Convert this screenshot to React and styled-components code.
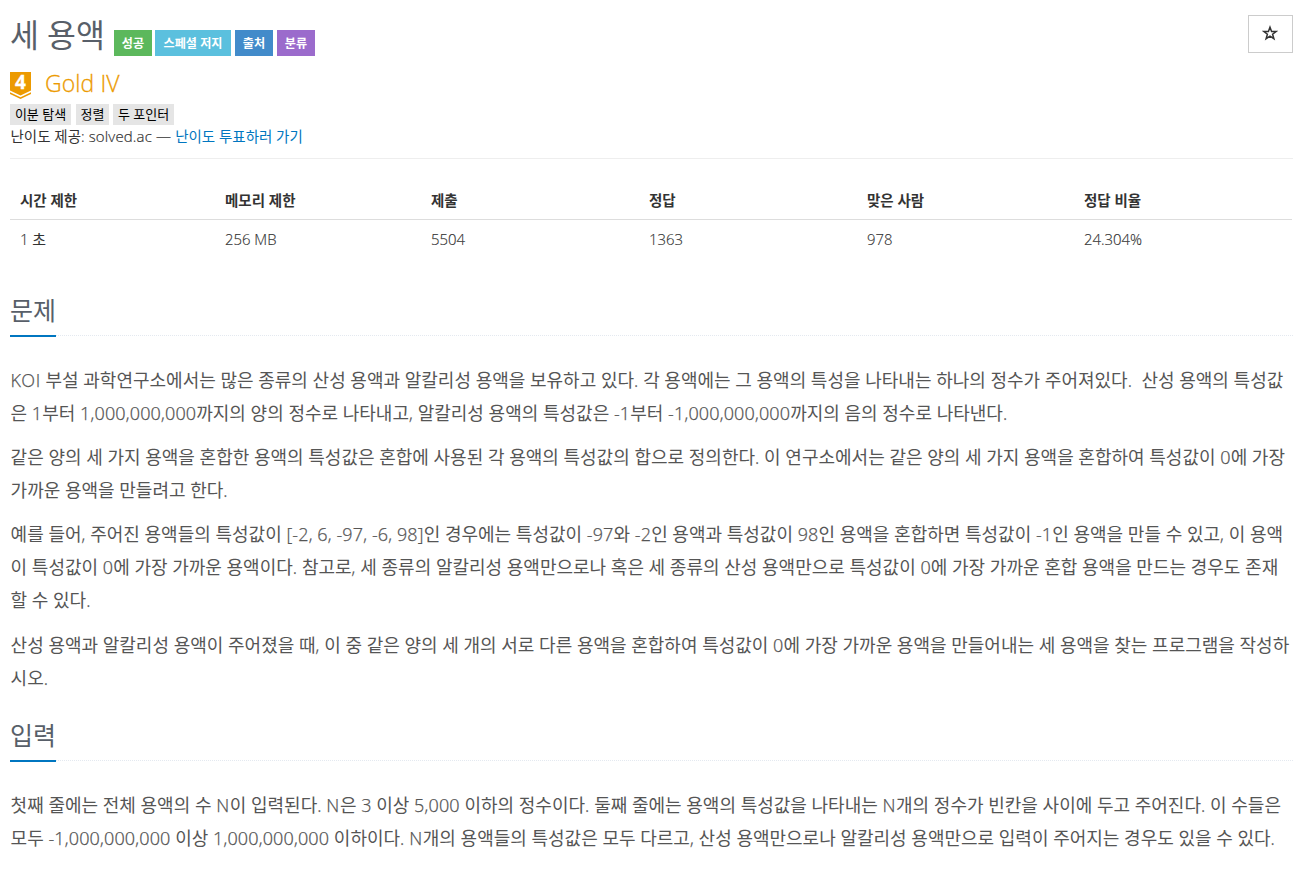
import styled, { createGlobalStyle } from 'styled-components'

const GlobalStyle = createGlobalStyle`
  * {
    box-sizing: border-box;
  }

  body {
    margin: 0;
    background-color: #fff;
    color: #333;
    font-family: 'Open Sans Light', 'Open Sans', 'Noto Sans CJK KR', sans-serif;
    font-size: 15px;
    font-weight: 400;
    line-height: 1.6;
  }
`

const Page = styled.main`
  width: 1303px;
  padding: 15px 10px 0;
`

const Header = styled.header`
  display: flex;
  flex-direction: column;
  height: 144px;
  border-bottom: 1px solid #eee;
`

const TitleRow = styled.div`
  display: flex;
  justify-content: space-between;
  height: 52px;
`

const TitleGroup = styled.div`
  display: flex;
  align-items: flex-start;
`

const Title = styled.h1`
  width: 104px;
  margin: 0;
  color: #585f69;
  font-size: 31.4px;
  font-weight: 400;
  line-height: 40px;
  white-space: nowrap;
`

const LabelGroup = styled.div`
  display: flex;
  gap: 4px;
  padding-top: 15px;
`

const Label = styled.span`
  width: ${({ $width }) => $width};
  height: 26px;
  background-color: ${({ $color }) => $color};
  color: #fff;
  font-size: 12.1px;
  font-weight: 700;
  line-height: 27px;
  text-align: center;
  white-space: nowrap;

  &:first-child {
    margin-right: -1px;
  }
`

const StarButton = styled.button`
  display: flex;
  align-items: center;
  justify-content: center;
  width: 45px;
  height: 38px;
  padding: 0 2px 2px 0;
  border: 1px solid #ccc;
  background-color: #fff;
  color: #333;
`

const Tier = styled.div`
  display: flex;
  align-items: center;
  gap: 14px;
  height: 36px;
  color: #ec9a00;
  font-size: 23px;
  line-height: 32px;
`

const TierBadge = styled.svg`
  display: block;
  width: 21px;
  height: 27px;
  overflow: visible;
`

const TierName = styled.span`
  height: 36px;
  letter-spacing: 0.1px;
  -webkit-text-stroke: 0.3px currentColor;
`

const TagGroup = styled.div`
  display: flex;
  gap: 5px;
  margin-top: 1px;
`

const Tag = styled.span`
  width: ${({ $width }) => $width};
  height: 21px;
  background-color: #e5e5e5;
  color: #000;
  font-size: 13px;
  line-height: 20px;
  text-align: center;
  white-space: nowrap;

  &:last-child {
    margin-left: -1px;
  }
`

const Credit = styled.div`
  height: 24px;
  padding-left: 0.5px;
  font-size: 14.5px;
  line-height: 22px;
`

const Source = styled.span`
  font-size: 15px;
  letter-spacing: 0.15px;
  -webkit-text-stroke: 0.2px currentColor;
`

const VoteLink = styled.a`
  color: #0076c0;
  text-decoration: none;
`

const Table = styled.table`
  width: 1282px;
  margin-top: 22px;
  border-collapse: collapse;
  table-layout: fixed;
`

const HeadCell = styled.th`
  width: ${({ $width }) => $width};
  height: 38px;
  padding: 2px 10px 0;
  border-bottom: 1px solid #ddd;
  font-size: 14.5px;
  font-weight: 700;
  text-align: left;
`

const Cell = styled.td`
  height: 40px;
  padding: 2px 10px 0;
  font-size: 14.9px;
  -webkit-text-stroke: 0.15px currentColor;
`

const Section = styled.section`
  margin-top: ${({ $top }) => $top};
`

const Headline = styled.div`
  display: flex;
  height: 45px;
  border-bottom: 1px dotted #e4e9f0;
`

const HeadlineText = styled.h2`
  width: 46px;
  height: 46px;
  margin: 0;
  border-bottom: 2px solid #0076c0;
  color: #585f69;
  font-size: 25px;
  font-weight: 400;
  line-height: 39px;
  white-space: nowrap;
`

const Body = styled.div`
  margin-top: 28px;
  padding-left: 0.6px;
`

const Paragraph = styled.p`
  margin: 0 0 11.2px;
  color: #555;
  font-size: 18px;
  line-height: 33px;
`

const Line = styled.span`
  display: block;
  white-space: pre;
`

const Latin = styled.span`
  letter-spacing: ${({ $wide }) => ($wide ? '0.6px' : '0.14px')};
  -webkit-text-stroke: 0.25px currentColor;
`

const labels = [
  { text: '성공', color: '#5cb85c', width: '38px' },
  { text: '스페셜 저지', color: '#5bc0de', width: '76px' },
  { text: '출처', color: '#428bca', width: '38px' },
  { text: '분류', color: '#9b6bcc', width: '38px' },
]

const tags = [
  { text: '이분 탐색', width: '61px' },
  { text: '정렬', width: '33px' },
  { text: '두 포인터', width: '61px' },
]

const stats = [
  { title: '시간 제한', value: '1 초', width: '205px' },
  { title: '메모리 제한', value: '256 MB', width: '206px' },
  { title: '제출', value: '5504', width: '218px' },
  { title: '정답', value: '1363', width: '218px' },
  { title: '맞은 사람', value: '978', width: '217px' },
  { title: '정답 비율', value: '24.304%', width: '218px' },
]

const sections = [
  {
    title: '문제',
    top: '32px',
    paragraphs: [
      [
        'KOI 부설 과학연구소에서는 많은 종류의 산성 용액과 알칼리성 용액을 보유하고 있다. 각 용액에는 그 용액의 특성을 나타내는 하나의 정수가 주어져있다.  산성 용액의 특성값',
        '은 1부터 1,000,000,000까지의 양의 정수로 나타내고, 알칼리성 용액의 특성값은 -1부터 -1,000,000,000까지의 음의 정수로 나타낸다.',
      ],
      [
        '같은 양의 세 가지 용액을 혼합한 용액의 특성값은 혼합에 사용된 각 용액의 특성값의 합으로 정의한다. 이 연구소에서는 같은 양의 세 가지 용액을 혼합하여 특성값이 0에 가장',
        '가까운 용액을 만들려고 한다.',
      ],
      [
        '예를 들어, 주어진 용액들의 특성값이 [-2, 6, -97, -6, 98]인 경우에는 특성값이 -97와 -2인 용액과 특성값이 98인 용액을 혼합하면 특성값이 -1인 용액을 만들 수 있고, 이 용액',
        '이 특성값이 0에 가장 가까운 용액이다. 참고로, 세 종류의 알칼리성 용액만으로나 혹은 세 종류의 산성 용액만으로 특성값이 0에 가장 가까운 혼합 용액을 만드는 경우도 존재',
        '할 수 있다.',
      ],
      [
        '산성 용액과 알칼리성 용액이 주어졌을 때, 이 중 같은 양의 세 개의 서로 다른 용액을 혼합하여 특성값이 0에 가장 가까운 용액을 만들어내는 세 용액을 찾는 프로그램을 작성하',
        '시오.',
      ],
    ],
  },
  {
    title: '입력',
    top: '21.4px',
    paragraphs: [
      [
        '첫째 줄에는 전체 용액의 수 N이 입력된다. N은 3 이상 5,000 이하의 정수이다. 둘째 줄에는 용액의 특성값을 나타내는 N개의 정수가 빈칸을 사이에 두고 주어진다. 이 수들은',
        '모두 -1,000,000,000 이상 1,000,000,000 이하이다. N개의 용액들의 특성값은 모두 다르고, 산성 용액만으로나 알칼리성 용액만으로 입력이 주어지는 경우도 있을 수 있다.',
      ],
    ],
  },
]

// letters and numbers are set a little looser than the hangul around them
const renderLine = (line) =>
  line.split(/([A-Z]+|[\d,.[\]-]+)/).map((part, index) =>
    index % 2 ? (
      <Latin key={index} $wide={/[A-Z]/.test(part)}>
        {part}
      </Latin>
    ) : (
      part
    )
  )

const StarIcon = () => (
  <svg width="16" height="16" viewBox="0 0 16 16" fill="none" stroke="#333" strokeWidth="1.5">
    <path d="M8 2.2 9.6 6.4 14.1 6.5 10.6 9.2 11.9 13.7 8 11.1 4.1 13.7 5.4 9.2 1.9 6.5 6.4 6.4Z" />
  </svg>
)

const GoldBadge = () => (
  <TierBadge viewBox="0 0 21 27">
    <path d="M0 0H21V18.5L10.5 23.5 0 18.5Z" fill="#ec9a00" />
    <path d="M0 20.2 10.5 25.2 21 20.2V22L10.5 27 0 22Z" fill="#ec9a00" />
    <text
      x="10.5"
      y="17.3"
      fill="#fff"
      stroke="#fff"
      strokeWidth="0.3"
      fontFamily="Open Sans"
      fontSize="19"
      fontWeight="700"
      textAnchor="middle"
    >
      4
    </text>
  </TierBadge>
)

const App = () => {
  return (
    <>
      <GlobalStyle />
      <Page>
        <Header>
          <TitleRow>
            <TitleGroup>
              <Title>세 용액</Title>
              <LabelGroup>
                {labels.map((item) => (
                  <Label key={item.text} $color={item.color} $width={item.width}>
                    {item.text}
                  </Label>
                ))}
              </LabelGroup>
            </TitleGroup>
            <StarButton>
              <StarIcon />
            </StarButton>
          </TitleRow>
          <Tier>
            <GoldBadge />
            <TierName>Gold IV</TierName>
          </Tier>
          <TagGroup>
            {tags.map((item) => (
              <Tag key={item.text} $width={item.width}>
                {item.text}
              </Tag>
            ))}
          </TagGroup>
          <Credit>
            난이도 제공<Source>: solved.ac — </Source>
            <VoteLink>난이도 투표하러 가기</VoteLink>
          </Credit>
        </Header>
        <Table>
          <thead>
            <tr>
              {stats.map((item) => (
                <HeadCell key={item.title} $width={item.width}>
                  {item.title}
                </HeadCell>
              ))}
            </tr>
          </thead>
          <tbody>
            <tr>
              {stats.map((item) => (
                <Cell key={item.title}>{item.value}</Cell>
              ))}
            </tr>
          </tbody>
        </Table>
        {sections.map((section) => (
          <Section key={section.title} $top={section.top}>
            <Headline>
              <HeadlineText>{section.title}</HeadlineText>
            </Headline>
            <Body>
              {section.paragraphs.map((lines) => (
                <Paragraph key={lines[0]}>
                  {lines.map((line) => (
                    <Line key={line}>{renderLine(line)}</Line>
                  ))}
                </Paragraph>
              ))}
            </Body>
          </Section>
        ))}
      </Page>
    </>
  )
}

export default App
